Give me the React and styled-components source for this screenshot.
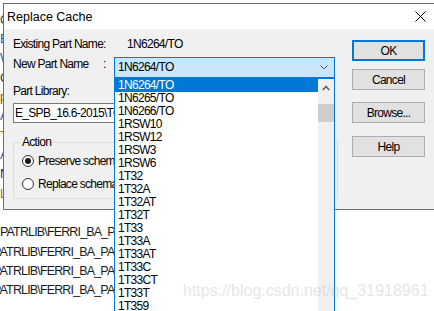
import React from 'react';
import styled, { createGlobalStyle } from 'styled-components';

const UI_FONT = `'Liberation Sans', Arial, sans-serif`;

const GlobalStyle = createGlobalStyle`
	html, body {
		margin: 0;
		padding: 0;
		background: #fff;
	}
	body {
		width: 434px;
		height: 311px;
		overflow: hidden;
		font-family: ${UI_FONT};
	}
`;

const Screen = styled.div`
	position: relative;
	width: 434px;
	height: 311px;
	overflow: hidden;
	background: #fff;
`;

// the editor window behind the dialog, only its edges peek out
const Backdrop = styled.div`
	display: flex;
	flex-direction: column;
	padding-top: 10.7px;
`;

const BackLine = styled.div`
	height: 19.33px;
	line-height: 19.33px;
	font-size: 12.5px;
	letter-spacing: -0.85px;
	white-space: nowrap;
	color: ${({ $color }) => $color || '#1b1b1b'};
	text-indent: ${({ $indent }) => $indent || 0}px;
`;

const Dialog = styled.div`
	position: absolute;
	left: 3px;
	top: 3px;
	width: 441px;
	box-sizing: border-box;
	border: 1px solid #6e6e6e;
	background: #f0f0f0;
	display: flex;
	flex-direction: column;
`;

const TitleBar = styled.div`
	height: 25px;
	background: #fff;
	display: flex;
	align-items: center;
	justify-content: space-between;
	padding-left: 3px;
	font-size: 12.5px;
	color: #000;
`;

const CloseButton = styled.div`
	width: 46px;
	height: 25px;
	display: flex;
	align-items: center;
	justify-content: center;
`;

const Body = styled.div`
	height: 180px;
	display: grid;
	grid-template-columns: 348px 73px;
	align-items: start;
	font-size: 12px;
	letter-spacing: -0.7px;
	color: #000;
`;

const Form = styled.div`
	display: flex;
	flex-direction: column;
	align-items: flex-start;
	padding: 8px 0 0 9px;
`;

const Row = styled.div`
	display: flex;
	align-items: flex-start;
	margin-top: ${({ $gap }) => $gap || 0}px;
	line-height: 15px;
`;

const Label = styled.div`
	width: ${({ $w }) => $w}px;
	line-height: 15px;
	white-space: nowrap;
`;

const ComboWrap = styled.div`
	position: relative;
	width: 221px;
`;

const Combo = styled.div`
	height: 21px;
	box-sizing: border-box;
	border: 1px solid #0078d7;
	background: #cce4f7;
	display: flex;
	align-items: center;
	justify-content: space-between;
	padding: 0 6px 0 3px;
`;

const DropList = styled.div`
	position: absolute;
	left: 0;
	top: 100%;
	width: 221px;
	height: 240px;
	box-sizing: border-box;
	border: 1px solid #0078d7;
	background: #fff;
	display: flex;
	z-index: 2;
`;

const Items = styled.div`
	flex: 1;
	overflow: hidden;
`;

const Item = styled.div`
	height: 13px;
	line-height: 13px;
	padding-left: 3px;
	white-space: nowrap;
	background: ${({ $selected }) => ($selected ? '#0078d7' : 'transparent')};
	color: ${({ $selected }) => ($selected ? '#fff' : '#000')};
`;

const ScrollBar = styled.div`
	width: 16px;
	background: #f0f0f0;
	display: flex;
	flex-direction: column;
	align-items: center;
`;

const ScrollArrow = styled.div`
	height: 17px;
	width: 16px;
	display: flex;
	align-items: center;
	justify-content: center;
`;

const ScrollThumb = styled.div`
	width: 16px;
	height: 18px;
	margin-top: 8px;
	background: #cdcdcd;
`;

const TextBox = styled.div`
	width: 322px;
	height: 20px;
	box-sizing: border-box;
	margin-top: 4px;
	border: 1px solid #7a7a7a;
	background: #fff;
	line-height: 18px;
	padding-left: 1px;
	white-space: nowrap;
	overflow: hidden;
`;

const GroupBox = styled.fieldset`
	width: 325px;
	box-sizing: border-box;
	margin: 12px 0 0 0;
	padding: 3px 6px 6px 8px;
	border: 1px solid #dcdcdc;
	border-radius: 0;
	min-width: 0;
	display: flex;
	flex-direction: column;
	gap: 7px;
`;

const Legend = styled.legend`
	padding: 0 1px;
	margin-left: -1px;
	line-height: 15px;
`;

const RadioRow = styled.div`
	height: 16px;
	display: flex;
	align-items: center;
	gap: 4px;
	white-space: nowrap;
`;

const RadioDot = styled.span`
	width: 12px;
	height: 12px;
	box-sizing: border-box;
	border-radius: 50%;
	border: 1px solid #333;
	background: #fff;
	display: flex;
	align-items: center;
	justify-content: center;

	&::after {
		content: '';
		width: 6px;
		height: 6px;
		border-radius: 50%;
		background: ${({ $checked }) => ($checked ? '#1a1a1a' : 'transparent')};
	}
`;

const Buttons = styled.div`
	display: flex;
	flex-direction: column;
	padding-top: 11px;
`;

const Button = styled.div`
	height: 21px;
	box-sizing: border-box;
	margin-top: ${({ $gap }) => $gap || 0}px;
	border: ${({ $default }) => ($default ? '2px solid #0078d7' : '1px solid #adadad')};
	background: #e1e1e1;
	display: flex;
	align-items: center;
	justify-content: center;
`;

const Watermark = styled.div`
	position: absolute;
	left: 183px;
	top: 283px;
	font-size: 16px;
	line-height: 16px;
	color: rgba(180, 180, 180, 0.35);
	white-space: nowrap;
	pointer-events: none;
	z-index: 5;
`;

const parts = [
	'1N6264/TO', '1N6265/TO', '1N6266/TO', '1RSW10', '1RSW12', '1RSW3', '1RSW6',
	'1T32', '1T32A', '1T32AT', '1T32T', '1T33', '1T33A', '1T33AT', '1T33C',
	'1T33CT', '1T33T', '1T359', '1T362',
];

// only the first letter of the upper lines shows left of the dialog
const backLines = [
	{ text: 'C', color: '#333' },
	{ text: 'E', color: '#1a4fb0' },
	{ text: 'W', color: '#1a4fb0' },
	{ text: 'C', color: '#333' },
	{ text: 'p', color: '#8a5a00' },
	{ text: 'A', color: '#1a4fb0' },
	{ text: 'T', color: '#b06a00' },
	{ text: 'A', color: '#1a4fb0' },
	{ text: 'M', color: '#1a3070' },
	{ text: 'L', color: '#b06a00' },
	{ text: '', color: '#fff' },
	{ text: 'PATRLIB\\FERRI_BA_PAD', indent: 0 },
	{ text: 'PATRLIB\\FERRI_BA_PAD', indent: -7 },
	{ text: 'PATRLIB\\FERRI_BA_PAD', indent: -7 },
	{ text: 'PATRLIB\\FERRI_BA_PAD', indent: -7 },
];

const App = () => (
	<>
		<GlobalStyle />
		<Screen>
			<Backdrop>
				{backLines.map((l, i) => (
					<BackLine key={i} $color={l.color} $indent={l.indent}>
						{l.text}
					</BackLine>
				))}
			</Backdrop>

			<Dialog>
				<TitleBar>
					<span>Replace Cache</span>
					<CloseButton>
						<svg width='11' height='11' viewBox='0 0 11 11'>
							<path d='M0.5 0.5 L10.5 10.5 M10.5 0.5 L0.5 10.5' stroke='#000' strokeWidth='1' fill='none' />
						</svg>
					</CloseButton>
				</TitleBar>

				<Body>
					<Form>
						<Row>
							<Label $w={114}>Existing Part Name:</Label>
							<span>1N6264/TO</span>
						</Row>

						<Row $gap={5}>
							<Label $w={90}>New Part Name</Label>
							<Label $w={11}>:</Label>
							<ComboWrap>
								<Combo>
									<span>1N6264/TO</span>
									<svg width='8' height='5' viewBox='0 0 8 5'>
										<path d='M0.5 0.5 L4 4 L7.5 0.5' stroke='#555' strokeWidth='1' fill='none' />
									</svg>
								</Combo>
								<DropList>
									<Items>
										{parts.map((p, i) => (
											<Item key={p} $selected={i === 0}>
												{p}
											</Item>
										))}
									</Items>
									<ScrollBar>
										<ScrollArrow>
											<svg width='8' height='6' viewBox='0 0 8 6'>
												<path d='M0.8 5 L4 1.5 L7.2 5' stroke='#606060' strokeWidth='1.6' fill='none' />
											</svg>
										</ScrollArrow>
										<ScrollThumb />
									</ScrollBar>
								</DropList>
							</ComboWrap>
						</Row>

						<Row $gap={6}>
							<Label $w={120}>Part Library:</Label>
						</Row>
						<TextBox>E_SPB_16.6-2015\TOOLS\CAPTURE</TextBox>

						<GroupBox>
							<Legend>Action</Legend>
							<RadioRow>
								<RadioDot $checked />
								<span>Preserve schematic</span>
							</RadioRow>
							<RadioRow>
								<RadioDot />
								<span>Replace schematic</span>
							</RadioRow>
						</GroupBox>
					</Form>

					<Buttons>
						<Button $default>OK</Button>
						<Button $gap={8}>Cancel</Button>
						<Button $gap={12}>Browse...</Button>
						<Button $gap={13}>Help</Button>
					</Buttons>
				</Body>
			</Dialog>

			<Watermark>https://blog.csdn.net/qq_31918961</Watermark>
		</Screen>
	</>
);

export default App;
